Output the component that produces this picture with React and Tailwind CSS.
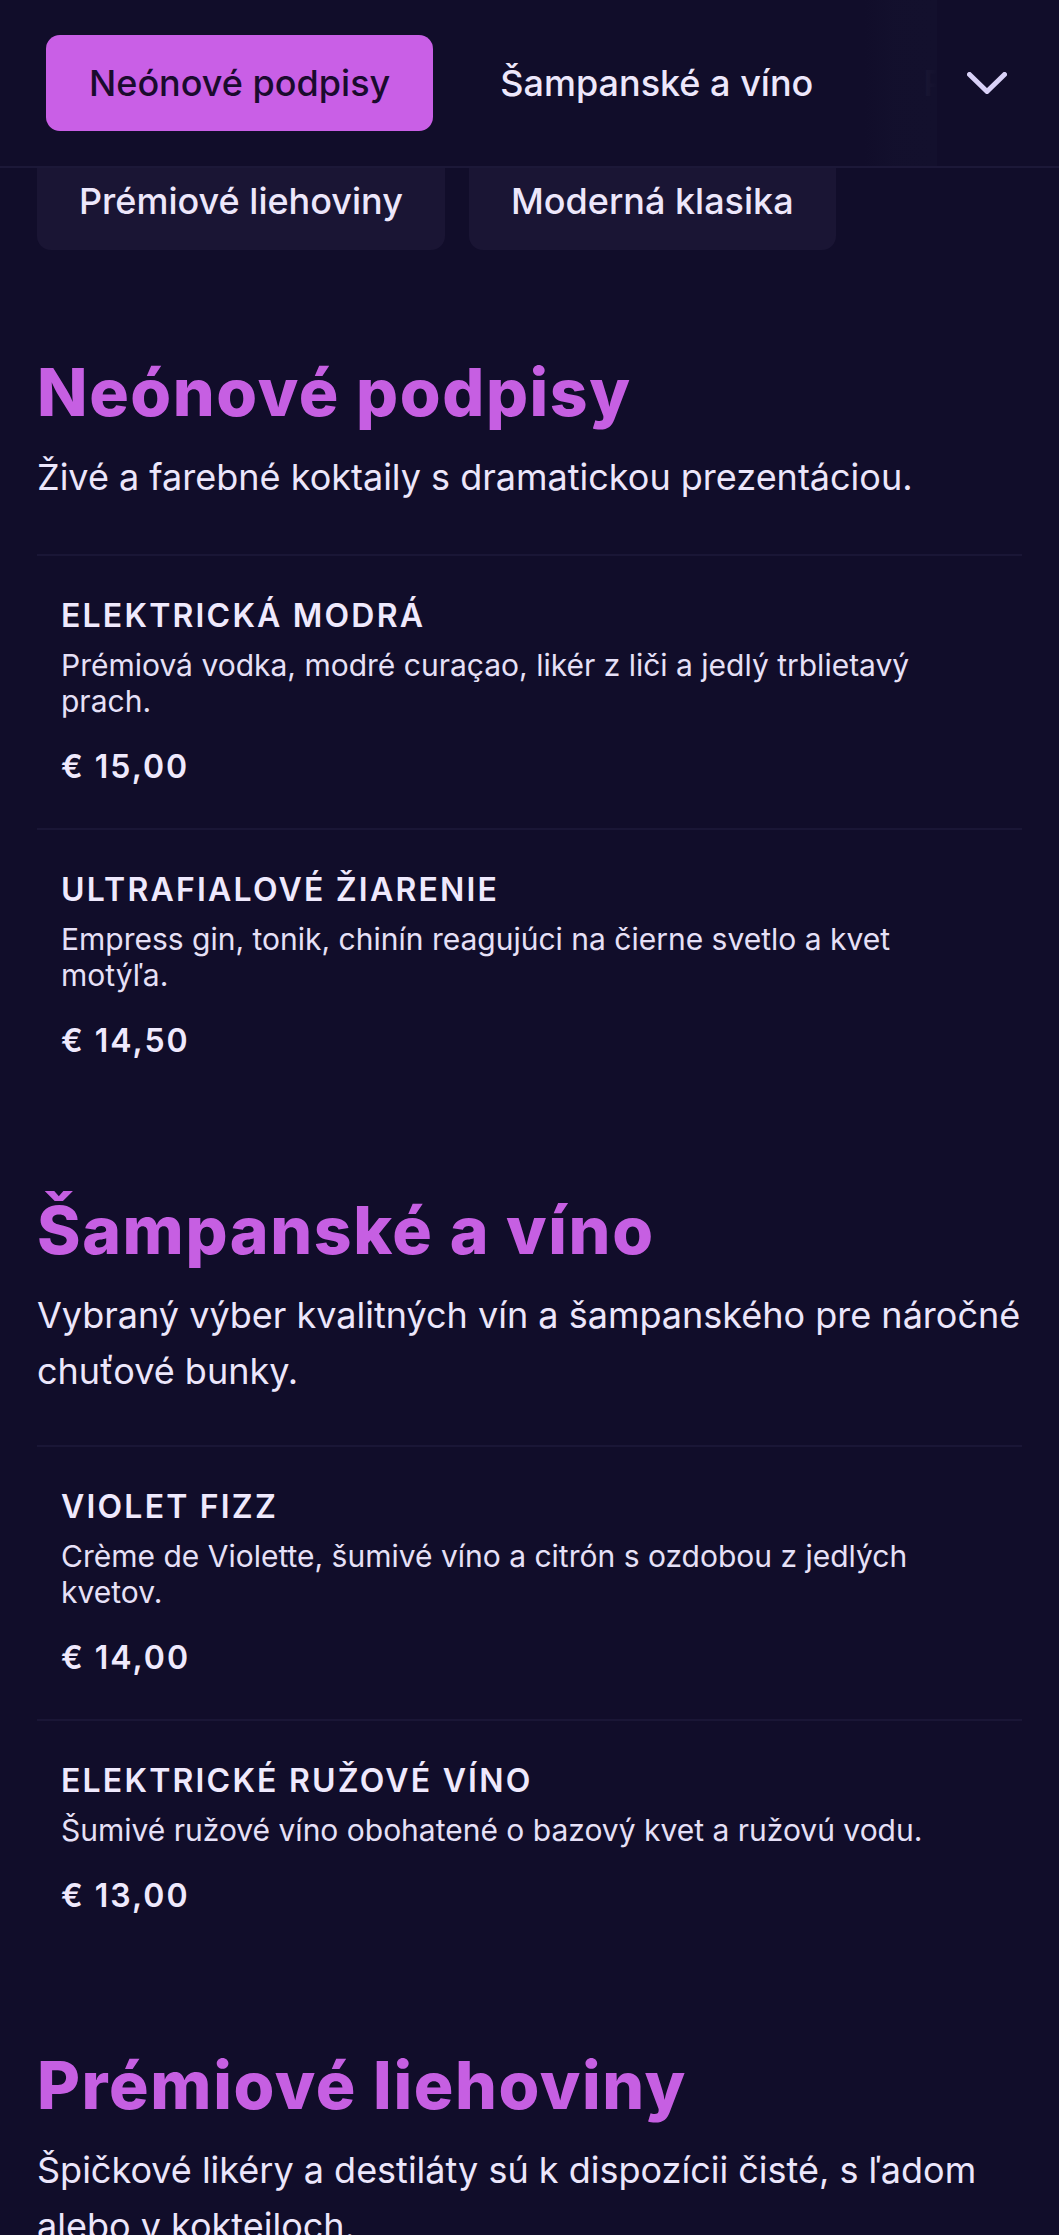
const tabs = ["Neónové podpisy", "Šampanské a víno", "Prémiové liehoviny", "Moderná klasika"];

const sections = [
    {
        title: "Neónové podpisy",
        text: "Živé a farebné koktaily s dramatickou prezentáciou.",
        items: [
            { name: "ELEKTRICKÁ MODRÁ", desc: "Prémiová vodka, modré curaçao, likér z liči a jedlý trblietavý prach.", price: "€ 15,00" },
            { name: "ULTRAFIALOVÉ ŽIARENIE", desc: "Empress gin, tonik, chinín reagujúci na čierne svetlo a kvet motýľa.", price: "€ 14,50" },
        ],
    },
    {
        title: "Šampanské a víno",
        text: "Vybraný výber kvalitných vín a šampanského pre náročné chuťové bunky.",
        items: [
            { name: "VIOLET FIZZ", desc: "Crème de Violette, šumivé víno a citrón s ozdobou z jedlých kvetov.", price: "€ 14,00" },
            { name: "ELEKTRICKÉ RUŽOVÉ VÍNO", desc: "Šumivé ružové víno obohatené o bazový kvet a ružovú vodu.", price: "€ 13,00" },
        ],
    },
    {
        title: "Prémiové liehoviny",
        text: "Špičkové likéry a destiláty sú k dispozícii čisté, s ľadom alebo v kokteiloch.",
        items: [],
    },
];

function MenuItem({ item }) {
    return (
        <div className="border-t-2 border-[#1a1636] px-6 pt-[40px] pb-[41px]">
            <h3 className="text-[32px] leading-[40px] font-semibold tracking-[2.2px] text-[#efe9fd] mb-[11px]">{item.name}</h3>
            <p className="text-[30px] leading-[36px] text-[#e6e0f7] mb-[28px]">{item.desc}</p>
            <p className="text-[32px] leading-[40px] font-semibold tracking-[2px] text-[#efe9fd]">{item.price}</p>
        </div>
    );
}

export default function App() {
    return (
        <div className="min-h-screen bg-[#110d2a] font-['Inter',sans-serif] overflow-hidden">
            {/* Sticky category bar */}
            <header className="sticky top-0 z-10 h-[168px] bg-[#110d2a] border-b-2 border-[#1c1838] flex">
                <div className="relative flex-1 overflow-hidden">
                    <div className="flex items-center gap-6 h-full pl-[46px]">
                        {tabs.map((tab, i) => (
                            <button
                                key={tab}
                                className={
                                    i === 0
                                        ? "shrink-0 whitespace-nowrap rounded-[14px] bg-[#c95fe6] px-[43px] py-6 text-[36px] leading-[48px] font-medium text-[#1a0b2e]"
                                        : "shrink-0 whitespace-nowrap rounded-[14px] px-[43px] py-6 text-[36px] leading-[48px] font-medium text-[#ede7fb]"
                                }
                            >
                                {tab}
                            </button>
                        ))}
                    </div>
                    <div className="absolute inset-y-0 right-0 w-[72px] bg-linear-to-r from-[#110d2a]/0 via-[#13102d]/90 via-40% to-[#13102d]" />
                </div>
                <button className="flex items-center pl-[30px] pr-[52px]">
                    <svg width="40" height="22" viewBox="0 0 40 22" fill="none" className="text-[#d9d1f7]">
                        <path d="M2.5 2.5 L20 19.5 L37.5 2.5" stroke="currentColor" strokeWidth="5" strokeLinecap="round" strokeLinejoin="round" />
                    </svg>
                </button>
            </header>

            <main className="px-[37px]">
                {/* Category chips (partly under sticky bar) */}
                <div className="flex gap-6">
                    {tabs.slice(2).map((tab) => (
                        <div key={tab} className="rounded-b-[14px] bg-[#1a1534] px-[42px] pt-[9px] pb-[25px] text-[36px] leading-[48px] font-medium text-[#ede7fb] whitespace-nowrap">
                            {tab}
                        </div>
                    ))}
                </div>

                {sections.map((section, i) => (
                    <section key={section.title} className={i === 0 ? "mt-[102px]" : "mt-[88px]"}>
                        <h2 className="text-[66px] leading-[80px] font-extrabold tracking-[1.6px] text-[#c65fe2]">{section.title}</h2>
                        <p className="mt-[17px] text-[36px] leading-[56px] text-[#ece6fb]">{section.text}</p>
                        {section.items.length > 0 && (
                            <div className={i === 0 ? "mt-[49px]" : "mt-[46px]"}>
                                {section.items.map((item) => (
                                    <MenuItem key={item.name} item={item} />
                                ))}
                            </div>
                        )}
                    </section>
                ))}
            </main>
        </div>
    );
}
